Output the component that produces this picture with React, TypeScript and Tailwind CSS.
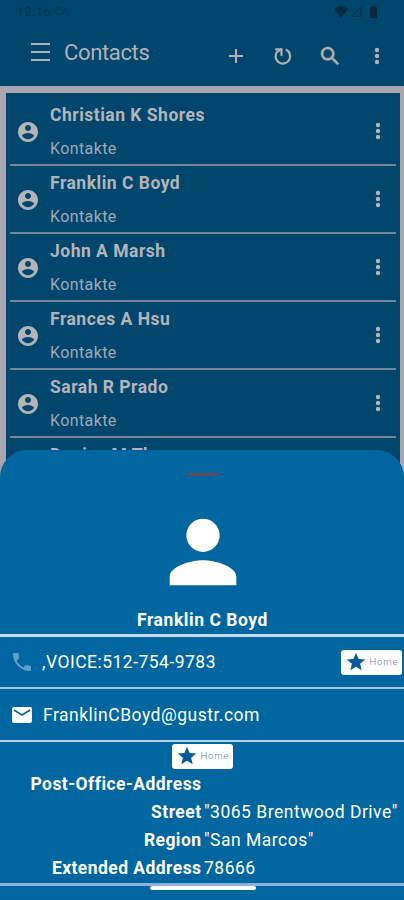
import type { ReactNode } from "react";

const contacts = ["Christian K Shores", "Franklin C Boyd", "John A Marsh", "Frances A Hsu", "Sarah R Prado", "Denise M Thomas"];

function Icon({ d, className, box = "0 0 24 24" }: { d: string; className: string; box?: string }) {
  return (
    <svg viewBox={box} className={`block shrink-0 fill-current ${className}`}>
      <path d={d} />
    </svg>
  );
}

const PERSON = "M12 12c2.21 0 4-1.79 4-4s-1.79-4-4-4-4 1.79-4 4 1.79 4 4 4zm0 2c-2.67 0-8 1.34-8 4v2h16v-2c0-2.66-5.33-4-8-4z";
const ACCOUNT = "M12 2C6.48 2 2 6.48 2 12s4.48 10 10 10 10-4.48 10-10S17.52 2 12 2zm0 3c1.66 0 3 1.34 3 3s-1.34 3-3 3-3-1.34-3-3 1.34-3 3-3zm0 14.2c-2.5 0-4.71-1.28-6-3.22.03-1.99 4-3.08 6-3.08 1.99 0 5.97 1.09 6 3.08-1.29 1.94-3.5 3.22-6 3.22z";
const PHONE = "M6.62 10.79c1.44 2.83 3.76 5.14 6.59 6.59l2.2-2.2c.27-.27.67-.36 1.02-.24 1.12.37 2.33.57 3.57.57.55 0 1 .45 1 1V20c0 .55-.45 1-1 1-9.39 0-17-7.61-17-17 0-.55.45-1 1-1h3.5c.55 0 1 .45 1 1 0 1.25.2 2.45.57 3.57.11.35.03.74-.25 1.02l-2.2 2.2z";
const MAIL = "M20 4H4c-1.1 0-1.99.9-1.99 2L2 18c0 1.1.9 2 2 2h16c1.1 0 2-.9 2-2V6c0-1.1-.9-2-2-2zm0 4l-8 5-8-5V6l8 5 8-5v2z";
const SEARCH = "M15.5 14h-.79l-.28-.27C15.41 12.59 16 11.11 16 9.5 16 5.91 13.09 3 9.5 3S3 5.91 3 9.5 5.91 16 9.5 16c1.61 0 3.09-.59 4.23-1.57l.27.28v.79l5 4.99L20.49 19l-4.99-5zm-6 0C7.01 14 5 11.99 5 9.5S7.01 5 9.5 5 14 7.01 14 9.5 11.99 14 9.5 14z";
const STAR = "M12 17.27L18.18 21l-1.64-7.03L22 9.24l-7.19-.61L12 2 9.19 8.63 2 9.24l5.46 4.73L5.82 21z";

function Dots({ className }: { className: string }) {
  return (
    <svg viewBox="0 0 6 18" className={`block h-[18px] w-1.5 shrink-0 fill-current ${className}`}>
      <circle cx="3" cy="3" r="2.2" />
      <circle cx="3" cy="9" r="2.2" />
      <circle cx="3" cy="15" r="2.2" />
    </svg>
  );
}

function StatusBar() {
  return (
    <div className="flex h-6 items-center pl-[17px] pr-[26px] text-[#07293f]">
      <span className="text-[12px] tracking-[0.9px] text-[#07334f]">12:16</span>
      <span className="ml-[3px] text-[11px] opacity-50">CA</span>
      <svg viewBox="0 0 44 14" className="ml-auto h-3.5 w-11 fill-current">
        <path d="M0 4.4C4 .2 10 .2 14 4.4L7 12.5z" />
        <path d="M17.2 11.5L27 2.2v9.3z" fill="none" stroke="currentColor" strokeWidth="1" opacity=".75" />
        <path d="M36 2h2V1h3v1h2v11h-7z" />
      </svg>
    </div>
  );
}

function Header() {
  return (
    <div className="flex h-[62px] items-start text-[#b3b1b5]">
      <div className="ml-[31px] mt-[19px] flex w-[19px] flex-col gap-[6px]">
        <div className="h-[2px] bg-current" />
        <div className="h-[2px] bg-current" />
        <div className="h-[2px] bg-current" />
      </div>
      <h1 className="ml-[14px] mt-[14px] text-[22px] leading-[30px] tracking-[-0.35px]">Contacts</h1>
      <div className="ml-auto flex items-center pr-[24px] pt-[20px]">
        <svg viewBox="0 0 16 16" className="block size-4 stroke-current stroke-2">
          <path d="M8 1v14M1 8h14" />
        </svg>
        <svg viewBox="0 0 20 20" className="ml-[29px] block size-5 fill-none stroke-current stroke-[2.2]">
          <path d="M12.8 3.6A7.3 7.3 0 1 1 4.6 5.2" />
          <path d="M2.2 3.4h6.3v6.3" />
          <path d="M8.5 3.4L4.6 5.6" />
        </svg>
        <Icon d={SEARCH} className="ml-[25px] size-[24.5px] stroke-current stroke-[0.5]" />
        <Dots className="ml-[31.5px]" />
      </div>
    </div>
  );
}

function ContactRow({ name }: { name: string }) {
  return (
    <div className="flex h-[68px] shrink-0 items-center border-b-2 border-[#72879a] pl-[6px] pr-[15px] text-[#b5b4b9]">
      <Icon d={ACCOUNT} className="mt-px size-6" />
      <div className="ml-[10px] flex h-full flex-col">
        <span className="mt-[7px] whitespace-nowrap text-[17.5px] font-bold leading-5 tracking-[0.5px]">{name}</span>
        <span className="mt-[14px] text-[16px] leading-5 tracking-[0.4px] text-[#a0aab5]">Kontakte</span>
      </div>
      <Dots className="ml-auto" />
    </div>
  );
}

function HomeBadge() {
  return (
    <div className="flex h-[25px] w-[61px] shrink-0 items-center rounded-[3px] bg-white pl-[4px]">
      <Icon d={STAR} className="size-[22px] text-[#075a95]" />
      <span className="ml-[2.5px] text-[9.5px] font-light tracking-[0.8px] text-[#5f7ba5]">Home</span>
    </div>
  );
}

function Field({ label, children }: { label: string; children?: ReactNode }) {
  return (
    <div className="flex h-7 items-center whitespace-nowrap text-[17.5px]">
      <div className="w-[201.5px] shrink-0 text-right font-bold tracking-[0.44px]">{label}</div>
      <div className="ml-[2.5px] tracking-[0.5px]">{children}</div>
    </div>
  );
}

function Sheet() {
  return (
    <section className="absolute inset-x-0 top-[450px] flex h-[450px] flex-col overflow-hidden rounded-t-[27px] bg-[#00669f] text-white">
      <div className="ml-[187px] mt-[23px] h-[3px] w-8 shrink-0 bg-[#5d4a5e]" />
      <Icon d={PERSON} className="ml-[153px] mt-[26px] size-[100px]" />
      <h2 className="mt-[6px] h-[25px] pl-px text-center text-[17.5px] font-bold leading-6 tracking-[0.55px]">Franklin C Boyd</h2>
      <div className="mt-px flex h-[55px] shrink-0 items-center border-t-[3px] border-b-2 border-t-[#c3d9ee] border-b-[#a9cae6] pl-[10px] pr-[2px]">
        <Icon d={PHONE} className="size-6 text-[#5f9fc9]" />
        <span className="ml-[8px] pt-px text-[17.5px] tracking-[0.48px]">,VOICE:512-754-9783</span>
        <div className="ml-auto">
          <HomeBadge />
        </div>
      </div>
      <div className="flex h-[53px] shrink-0 items-center border-b-2 border-[#b5d1ea] pl-[10px]">
        <Icon d={MAIL} className="h-[24px] w-6" />
        <span className="ml-[9px] pt-[2px] text-[17.5px] tracking-[0.5px]">FranklinCBoyd@gustr.com</span>
      </div>
      <div className="flex h-[144px] shrink-0 flex-col border-b-[3px] border-[#8fb0d8]">
        <div className="ml-[172px] flex h-[28px] shrink-0 items-center">
          <HomeBadge />
        </div>
        <Field label="Post-Office-Address" />
        <Field label="Street">"3065 Brentwood Drive"</Field>
        <Field label="Region">"San Marcos"</Field>
        <Field label="Extended Address">78666</Field>
      </div>
      <div className="ml-[150px] h-1 w-[106px] shrink-0 rounded-[2px] bg-white" />
    </section>
  );
}

export default function App() {
  return (
    <main className="relative h-[900px] w-[404px] overflow-hidden bg-[#00466d] font-['Roboto',sans-serif]">
      <StatusBar />
      <Header />
      <div className="flex h-[420px] flex-col overflow-hidden border-t-[7px] border-r-[4.5px] border-l-[6px] border-[#aaa6b0] px-1 pt-[5px]">
        {contacts.map((name) => (
          <ContactRow key={name} name={name} />
        ))}
      </div>
      <Sheet />
    </main>
  );
}
